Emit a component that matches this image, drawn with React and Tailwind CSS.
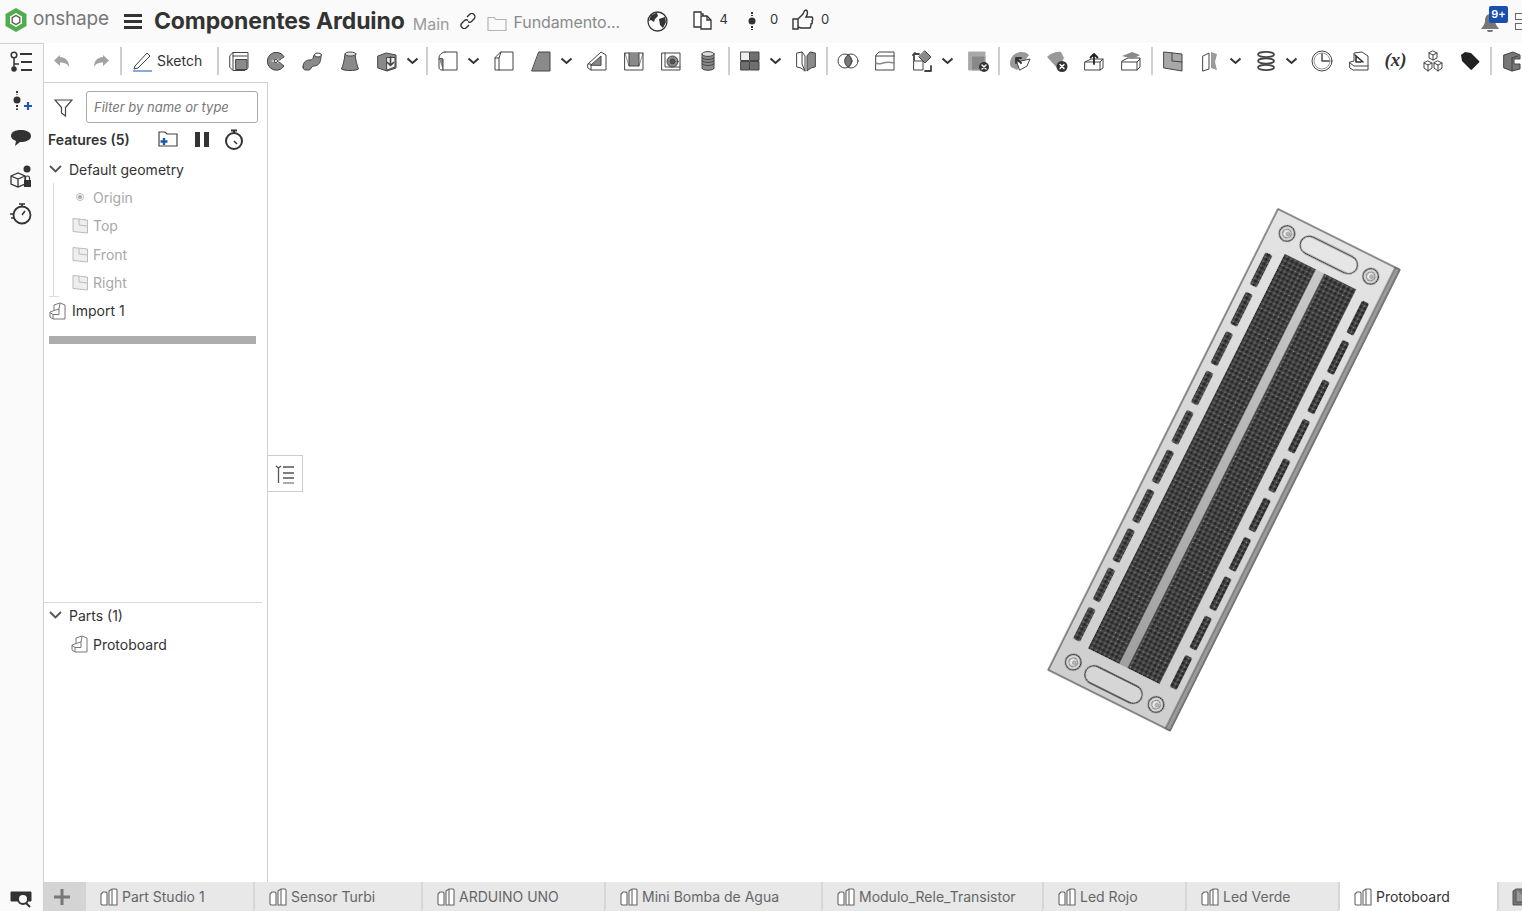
import React from 'react';

const DK = '#444';
const GR = '#8a8a8a';

// 24x24 drawings for the toolbar, keyed by feature name
const glyphs = {
    undo: <path d="M9 6 3 11.5 9 17v-3.5c4 0 7 1 9 4.5 0-6-3-9.5-9-10Z" fill="#a3a3a3" stroke="none" />,
    redo: <path d="M15 6l6 5.5L15 17v-3.5c-4 0-7 1-9 4.5 0-6 3-9.5 9-10Z" fill="#a3a3a3" stroke="none" />,
    extrude: <><path d="M3 6.5 6 3.5h15v15l-3 3H6l-3-3Z" fill="#fff" /><path d="M9 10.5h11v10H9Z" fill={GR} /><path d="M6 7h14M6 3.5V21" /></>,
    revolve: <><path d="M20 7.5A9 9 0 1 0 20 17l-5.5-4.5Z" fill={GR} /><path d="M8 12h13M14 10l-2 2 2 2M18 10l-2 2 2 2" stroke="#fff" /><circle cx="12" cy="12" r="1.6" fill="#fff" /></>,
    sweep: <><path d="M2 18c0-6 4-7 7-7s3-2 4-5l7 1c0 7-3 10-7 10-3 0-3 4-5 4H5c-2 0-3-1-3-3Z" fill={GR} /><ellipse cx="17" cy="6" rx="3.5" ry="2" fill="#fff" /></>,
    loft: <><path d="M7 5c-.5 6-2 11-3.5 15 3 2 14 2 17 0-1.5-4-3-9-3.5-15Z" fill={GR} /><ellipse cx="12.5" cy="5" rx="5.5" ry="2" fill="#ddd" /></>,
    thicken: <><path d="M3 7l8-3 10 2v13l-9 3-9-3Z" fill={GR} /><path d="M12 8.5h8V18l-8 3Z" fill="#eee" /><path d="M15.5 8v8M12.5 13.5l3 3 3-3" strokeWidth="1.6" /></>,
    fillet: <><path d="M9 3h12v18H6c-2 0-3-1-3-3V9c0-3 3-6 6-6Z" fill="#fff" /><path d="M3 10c2-1 3-1 4 0v11" fill={GR} /></>,
    chamfer: <><path d="M9 3h12v18H3V9Z" fill="#fff" /><path d="M3 9h4l2-6M7 9v12" /></>,
    draft: <path d="M10 3h11v19H3Z" fill={GR} />,
    rib: <><path d="M3 15 16 3l5 3v15H6l-3-2Z" fill="#fff" /><path d="M6 16 16 7v9Z" fill={GR} /><path d="M3 15h3v6" /></>,
    shell: <><path d="M3 4h18v17H3Z" fill="#fff" /><path d="M7 4v13h10V4" fill={GR} /><path d="M3 4l4 13M21 4l-4 13" strokeWidth=".6" /></>,
    hole: <><path d="M3 4h18v17H3Z" fill="#fff" /><path d="M6 4v14h15" /><circle cx="13.5" cy="12.5" r="5.5" fill={GR} /><circle cx="13.5" cy="12.5" r="2.4" fill="#555" /></>,
    thread: <><path d="M6 5v14c0 3 12 3 12 0V5" fill={GR} /><ellipse cx="12" cy="5" rx="6" ry="2.4" fill="#ddd" /><path d="M6 9c2 2 10 2 12 0M6 12c2 2 10 2 12 0M6 15c2 2 10 2 12 0" /></>,
    pattern: <><path d="M3 3h8.5v8.5H3Z" fill="#eee" /><path d="M12.5 3H21v8.5h-8.5ZM3 12.5h8.5V21H3ZM12.5 12.5H21V21h-8.5Z" fill="#6f6f6f" /></>,
    mirror: <><path d="M3 4l5-1 3 4v15l-4-3-4-1Z" fill="#fff" /><path d="M21 4l-5-1-3 4v15l4-3 4-1Z" fill={GR} /><path d="M8 3v12l3 7" /></>,
    boolean: <><circle cx="15" cy="12" r="7" fill="#fff" /><circle cx="9" cy="12" r="7" fill="#fff" /><path d="M12 6a7 7 0 0 1 0 12 7 7 0 0 1 0-12Z" fill="#777" /></>,
    split: <><path d="M3 6l3-3h15v18H3Z" fill="#fff" /><path d="M3 14c5 3 7-3 18 0" stroke={GR} strokeWidth="1.6" /><path d="M3 7h18" /></>,
    transform: <><path d="M4 12h9v9H4Z" fill="#fff" /><path d="M15 2l6 6-6 6-6-6Z" fill={GR} /><path d="M4 11V5h5M5 4l-2 2M15 22h6v-5" strokeWidth="1.8" /></>,
    deletePart: <><path d="M3 3h16v18H3Z" fill="#a8a8a8" stroke="#aaa" /><path d="M6 7h13v14H6Z" fill="#888" stroke="#aaa" /><circle cx="18" cy="18" r="5" fill="#333" stroke="none" /><path d="M16 16l4 4M20 16l-4 4" stroke="#fff" strokeWidth="1.4" /></>,
    surface: <><path d="M2 15C2 7 8 3 14 3c3 0 5 1 7 3l-7 10-5 5c-3-2-7-2-7-6Z" fill="#999" stroke="none" /><path d="M9 13 22 10l-3 7-7 4Z" fill="#fff" /><path d="M8 9l5 5M8 9h5M8 9v5" strokeWidth="1.8" stroke="#333" /></>,
    surfaceX: <><path d="M2 8c4-4 10-6 14-5l3 6-6 11Z" fill="#999" stroke="none" /><circle cx="17" cy="17.5" r="5.5" fill="#333" stroke="none" /><path d="M15 15.5l4 4M19 15.5l-4 4" stroke="#fff" strokeWidth="1.4" /></>,
    moveUp: <><path d="M3 13l6-3h12v9l-3 2H3Z" fill="#fff" /><path d="M3 13h15v8M18 13l3-3" /><path d="M12 15V5M8.5 8.5 12 5l3.5 3.5" strokeWidth="1.8" stroke="#222" /></>,
    replace: <><path d="M3 12l6-3h12v9l-3 3H3Z" fill="#fff" /><path d="M3 13h15v8M18 13l3-3" /><path d="M3 7l10-4 8 3-7 4Z" fill={GR} stroke="none" /></>,
    plane: <><path d="M3 3l18 2v17L3 19Z" fill="#a8a8a8" /><path d="M11 4v8l10 1" /></>,
    splitFace: <><path d="M5 7l6-3v16l-6 2Z" fill="#fff" /><path d="M13 3l6 2-2 8 2 8-6-2Z" fill="#9a9a9a" stroke="none" /></>,
    helix: <><ellipse cx="12" cy="5.5" rx="8" ry="2.6" strokeWidth="1.7" /><ellipse cx="12" cy="12" rx="8" ry="2.6" strokeWidth="1.7" /><ellipse cx="12" cy="18.5" rx="8" ry="2.6" strokeWidth="1.7" /></>,
    clock: <><circle cx="12" cy="12" r="10" fill="#fff" /><circle cx="12" cy="12" r="8" fill="#fff" stroke="#999" /><path d="M12 5v7h7" strokeWidth="1.4" /></>,
    imported: <><path d="M3 13l4-1V4l8-1 6 4v14H6l-3-2Z" fill="#fff" /><path d="M9 13V8M9 13h5M8 6l8 7" stroke="#333" strokeWidth="1.6" /><path d="M3 14l4 3h14" /></>,
    cubes: <><path d="M12 2l4 2v5l-4 2-4-2V4ZM8 4l4 2 4-2M12 6v5" fill="#fff" /><path d="M7 12l4 2v5l-4 3-4-3v-5ZM3 14l4 2 4-2M7 16v6M17 12l4 2v5l-4 3-4-3v-5ZM13 14l4 2 4-2M17 16v6" fill="#fff" /></>,
    tag: <path d="M3 6l4-3 6 1 8 8c.5.7.5 1 0 1.5l-7 7c-.5.5-1 .5-1.5 0L4 12Z" fill="#222" stroke="none" />,
    part: <><path d="M4 6l9-3 7 3v4h-6v5h6v5l-8 2-8-3Z" fill="#777" /><path d="M12 9l6-2M12 9v13" /></>,
};

const ToolIcon = ({ name }) => (
    <span className="w-[37px] h-full flex items-center justify-center shrink-0">
        <svg width="24" height="24" viewBox="0 0 24 24" fill="none" stroke={DK} strokeWidth="1" strokeLinejoin="round" strokeLinecap="round">
            {glyphs[name]}
        </svg>
    </span>
);

const Chevron = () => (
    <span className="w-[15px] mr-[4px] h-full flex items-center justify-center shrink-0">
        <svg width="13" height="8" viewBox="0 0 13 8" fill="none" stroke="#333" strokeWidth="2"><path d="M1.5 1.5 6.5 6l5-4.5" /></svg>
    </span>
);

const Sep = () => <span className="w-[2px] mx-[1.5px] h-[28px] bg-[#cfcfcf] shrink-0" />;

const toolbar = [
    'undo', 'redo', '|', 'SKETCH', '|', 'extrude', 'revolve', 'sweep', 'loft', 'thicken', 'v', '|',
    'fillet', 'v', 'chamfer', 'draft', 'v', 'rib', 'shell', 'hole', 'thread', '|',
    'pattern', 'v', 'mirror', '|', 'boolean', 'split', 'transform', 'v', 'deletePart', '|',
    'surface', 'surfaceX', 'moveUp', 'replace', '|', 'plane', 'splitFace', 'v', 'helix', 'v',
    'clock', 'imported', 'X', 'cubes', 'tag', '|', 'part',
];

const Toolbar = () => (
    <div className="h-[39px] pb-[4px] flex items-center overflow-hidden bg-white shrink-0">
        {toolbar.map((item, i) => {
            if (item === '|') return <Sep key={i} />;
            if (item === 'v') return <Chevron key={i} />;
            if (item === 'X') {
                return (
                    <span key={i} className="w-[37px] text-center shrink-0 text-[19px] font-bold italic text-[#333] font-['Liberation_Serif',serif]">(x)</span>
                );
            }
            if (item === 'SKETCH') {
                return (
                    <span key={i} className="w-[92px] flex items-center pl-[8px] gap-[4px] shrink-0 text-[14px] text-[#333]">
                        <svg width="22" height="22" viewBox="0 0 22 22" fill="none" stroke={DK} strokeWidth="1">
                            <path d="M4 16 16 3l3 3L7 18l-4 1Z" fill="#fff" />
                            <path d="M2 21h19" stroke="#3f6fc4" strokeWidth="1.2" />
                        </svg>
                        Sketch
                    </span>
                );
            }
            return <ToolIcon key={i} name={item} />;
        })}
    </div>
);

const Logo = () => (
    <svg width="22" height="24" viewBox="0 0 22 24">
        <path d="M11 0 21.5 6v12L11 24 .5 18V6Z" fill="#4fae4b" />
        <path d="M11 5l6 3.5v7L11 19l-6-3.5v-7Z" fill="#fff" />
        <path d="M11 7.5l3.8 2.2v4.6L11 16.5l-3.8-2.2V9.7Z" fill="none" stroke="#555" strokeWidth="1.3" />
    </svg>
);

const TopBar = () => (
    <div className="h-[43px] bg-[#fafafa] flex items-center shrink-0 overflow-hidden text-[#333]">
        <span className="ml-[5px] mt-[-3px] flex"><Logo /></span>
        <span className="ml-[6px] mt-[-5px] text-[19px] text-[#777] tracking-[-0.2px]">onshape</span>
        <span className="ml-[15px] w-[18px] flex flex-col gap-[3px]">
            <span className="h-[3px] bg-[#333]" /><span className="h-[3px] bg-[#333]" /><span className="h-[3px] bg-[#333]" />
        </span>
        <span className="ml-[12px] text-[23px] font-bold leading-none tracking-[-0.1px]">Componentes Arduino</span>
        <span className="ml-[8px] mt-[5px] text-[16px] text-[#9a9a9a]">Main</span>
        <svg className="ml-[11px] mt-[-1px]" width="16" height="16" viewBox="0 0 16 16" fill="none" stroke="#333" strokeWidth="1.4">
            <path d="M7 4l2.5-2.5a2.5 2.5 0 0 1 4.5 4.5L11.5 8.5a2.5 2.5 0 0 1-3.5 0" />
            <path d="M9 12l-2.5 2.5a2.5 2.5 0 0 1-4.5-4.5L4.5 7.5a2.5 2.5 0 0 1 3.5 0" />
        </svg>
        <svg className="ml-[11px] mt-[3px]" width="20" height="16" viewBox="0 0 20 16" fill="none" stroke="#b5b5b5" strokeWidth="1.2">
            <path d="M1 2.5h6l2 2h10v11H1Z" />
        </svg>
        <span className="ml-[6px] mt-[1px] text-[16px] text-[#8a8a8a] w-[134px] truncate tracking-[-0.1px]">Fundamento...</span>
        <svg width="21" height="21" viewBox="0 0 21 21" className="mt-[-1px]">
            <circle cx="10.5" cy="10.5" r="9.5" fill="#fff" stroke="#333" strokeWidth="1.3" />
            <path d="M4 4c2 0 4-2 6-2l1 3-3 3-1 3-3-2-2 1ZM12 8l6-2 1 5-3 6-3-3Z" fill="#333" />
        </svg>
        <svg className="ml-[24px] mt-[-4px]" width="20" height="20" viewBox="0 0 20 20" fill="none" stroke="#333" strokeWidth="1.3">
            <path d="M2 2h7v2h2v13H2Z" fill="#fff" />
            <path d="M9 6h6l4 4v9H9Z" fill="#fff" /><path d="M15 6v4h4" />
        </svg>
        <span className="ml-[7px] mt-[-4px] text-[13px]">4</span>
        <svg className="ml-[20px] mt-[-2px]" width="8" height="20" viewBox="0 0 8 20">
            <path d="M4 1v4M4 15v4" stroke="#333" strokeWidth="2" strokeDasharray="2 1" />
            <circle cx="4" cy="10" r="3.5" fill="#333" />
        </svg>
        <span className="ml-[14px] mt-[-4px] text-[13px]">0</span>
        <svg className="ml-[14px] mt-[-4px]" width="22" height="21" viewBox="0 0 22 21" fill="none" stroke="#333" strokeWidth="1.4">
            <path d="M1 10h5v10H1ZM6 10l5-5c1-2 1-4 3-4 2 1 2 4 0 7h6c1 1 1 3 0 4 1 1 0 3-1 3 0 2 0 3-1 4H9l-3-1" />
        </svg>
        <span className="ml-[7px] mt-[-4px] text-[13px]">0</span>
        <span className="ml-auto relative w-[32px] h-full shrink-0 flex items-center">
            <svg className="absolute left-[-9px] top-[14px]" width="18" height="18" viewBox="0 0 18 18">
                <path d="M9 0c4 0 5 4 5 7 0 3 2 5 4 8H0c2-3 4-5 4-8 0-3 1-7 5-7ZM6 16h6c0 3-6 3-6 0Z" fill="#777" />
            </svg>
            <span className="absolute left-[-1px] top-[6px] w-[19px] h-[17px] bg-[#1a4fae] rounded-[2px] text-white text-[11px] font-semibold leading-[17px] text-center">9+</span>
            <span className="absolute left-[25px] top-[13px] w-[14px] h-[7px] border border-[#666]" />
            <span className="absolute left-[25px] top-[23px] w-[14px] h-[7px] border border-[#666]" />
        </span>
    </div>
);

const RailIcon = ({ children, className = '' }) => (
    <svg className={className} width="24" height="24" viewBox="0 0 24 24" fill="none" stroke="#333" strokeWidth="1.5">{children}</svg>
);

const Rail = () => (
    <div className="w-[44px] shrink-0 pr-[2px] bg-[#fafafa] border-r border-t border-[#d0d0d0] flex flex-col items-center">
        <RailIcon className="mt-[6px]">
            <circle cx="5" cy="5" r="2.8" /><circle cx="5" cy="19" r="2" fill="#333" /><path d="M5 8v9M5 14h5" />
            <path d="M11 4h12M12 12h11M12 20h11" strokeWidth="2" />
        </RailIcon>
        <RailIcon className="mt-[15px]">
            <path d="M8 2v4M8 16v5" strokeWidth="2" strokeDasharray="2 1.5" />
            <circle cx="8" cy="11" r="3.5" fill="#333" stroke="none" />
            <path d="M15 17h8M19 13v8" stroke="#1f55b5" strokeWidth="2.2" />
        </RailIcon>
        <RailIcon className="mt-[13px]">
            <path d="M12 4c6 0 10 2.5 10 6 0 4-5 6-11 6l-5 4 1-5c-3-1-5-3-5-5 0-4 4-6 10-6Z" fill="#333" stroke="none" />
        </RailIcon>
        <RailIcon className="mt-[14px]">
            <path d="M2 12l7-3 7 3v8l-7 3-7-3ZM2 12l7 3 7-3M9 15v8" strokeWidth="1.3" />
            <circle cx="18" cy="5" r="3.5" fill="#333" stroke="none" />
            <path d="M15 16h7v7h-7Z" fill="#333" stroke="none" />
            <path d="M16.5 16v-2a2 2 0 0 1 4 0v2" strokeWidth="1.2" />
        </RailIcon>
        <RailIcon className="mt-[14px]">
            <circle cx="13" cy="13" r="8.5" strokeWidth="1.8" /><path d="M10 2h6M13 2v3M13 13l3-4" />
            <path d="M1 12h4M2 16h4" strokeWidth="1.3" />
        </RailIcon>
        <svg className="mt-auto mb-[3px]" width="22" height="18" viewBox="0 0 22 18" fill="none" stroke="#333">
            <path d="M1 2h20v9H1Z" fill="#333" />
            <circle cx="13" cy="9" r="5" fill="#fafafa" strokeWidth="2" /><path d="M16 13l4 4" strokeWidth="2" />
        </svg>
    </div>
);

const PlaneIcon = () => (
    <svg width="17" height="17" viewBox="0 0 17 17" fill="#eee" stroke="#bbb"><path d="M1 1.5 15.5 3v13L1 14.5Z" /><path d="M7 2v6l8.5 1" fill="none" /></svg>
);

const PartIcon = ({ stroke = '#555' }) => (
    <svg width="18" height="18" viewBox="0 0 18 18" fill="#fff" stroke={stroke}>
        <path d="M1 10l4-1.5V3l6-2 5 2v14H4l-3-2Z" />
        <path d="M1 10.5 4 12.5h6V7l-5 1.5" fill="none" /><path d="M4 12.5V17M11 1.5 10 7" fill="none" />
    </svg>
);

const Row = ({ children, className = '' }) => (
    <div className={`h-[28.3px] flex items-center text-[14px] ${className}`}>{children}</div>
);

const Caret = () => (
    <svg className="ml-[5px] mr-[7px]" width="13" height="8" viewBox="0 0 13 8" fill="none" stroke="#555" strokeWidth="1.8"><path d="M1 1l5.5 5.5L12 1" /></svg>
);

const PlaneRow = ({ label }) => (
    <Row className="text-[#a8a8a8]">
        <span className="ml-[18px] mr-[4px] flex"><PlaneIcon /></span>{label}
    </Row>
);

const FeaturePanel = () => (
    <div className="w-[224px] shrink-0 border-t border-r border-[#d0d0d0] flex flex-col text-[#333]">
        <div className="flex items-center mt-[8px] h-[32px]">
            <svg className="ml-[10px]" width="19" height="19" viewBox="0 0 19 19" fill="none" stroke="#444" strokeWidth="1.2"><path d="M1 2h17l-6.5 7.5V18L7.5 15V9.5Z" /></svg>
            <input readOnly placeholder="Filter by name or type" className="ml-[13px] w-[172px] h-[32px] border border-[#aaa] rounded-[3px] pl-[7px] text-[13px] italic placeholder:text-[#777] outline-none bg-white" />
        </div>
        <div className="flex items-center h-[28px] mt-[2px] mb-[2px] pl-[4px]">
            <span className="text-[14px] font-semibold w-[110px]">Features (5)</span>
            <svg width="20" height="18" viewBox="0 0 20 18" fill="none" stroke="#444" strokeWidth="1.2"><path d="M1 2h6l2 2h10v12H1Z" fill="#fff" /><path d="M6 8v7M2.5 11.5h7" stroke="#1f55b5" strokeWidth="2.4" /></svg>
            <span className="ml-[17px] flex gap-[4px]"><span className="w-[5px] h-[15px] bg-[#333]" /><span className="w-[5px] h-[15px] bg-[#333]" /></span>
            <svg className="ml-[15px]" width="20" height="21" viewBox="0 0 20 21" fill="none" stroke="#333" strokeWidth="2"><circle cx="10" cy="12" r="8" /><path d="M7 1.5h6M10 2v2" /><path d="M10 12l3 3" strokeWidth="1.5" /></svg>
        </div>
        <Row>
            <Caret />Default geometry
        </Row>
        <div className="relative ml-[9px] border-l border-[#ddd]">
            <Row className="text-[#a8a8a8]">
                <span className="ml-[22px] mr-[9px] w-[8px] h-[8px] rounded-full border border-[#bbb] flex items-center justify-center">
                    <span className="w-[4px] h-[4px] rounded-full bg-[#aaa]" />
                </span>
                Origin
            </Row>
            <PlaneRow label="Top" />
            <PlaneRow label="Front" />
            <PlaneRow label="Right" />
            <span className="absolute left-[-5px] bottom-[-1px] w-[10px] h-px bg-[#ddd]" />
        </div>
        <Row>
            <span className="ml-[5px] mr-[5px] flex"><PartIcon stroke="#777" /></span>Import 1
        </Row>
        <div className="mt-[11px] ml-[5px] w-[207px] h-[8px] bg-[#adadad]" />
        <div className="mt-auto mr-[5px] h-[280px] border-t border-[#d9d9d9]">
            <Row className="mt-[-2px]"><Caret />Parts (1)</Row>
            <Row className="mt-[1px]"><span className="ml-[27px] mr-[4px] flex"><PartIcon stroke="#777" /></span>Protoboard</Row>
        </div>
    </div>
);

const slotVs = [62, 106, 150, 194, 238, 282, 326, 370, 414, 458];

const Screw = ({ x, y }) => (
    <g>
        <circle cx={x} cy={y} r="7.8" fill="#d8d8d8" stroke="#333" strokeWidth="1.3" />
        <circle cx={x} cy={y} r="4.3" fill="#eee" stroke="#555" strokeWidth=".9" />
        <circle cx={x + 1} cy={y} r="1.9" fill="#bbb" stroke="#777" strokeWidth=".6" />
    </g>
);

const Breadboard = () => (
    <svg className="absolute left-[772px] top-[118px]" width="370" height="540" viewBox="0 0 370 540">
        <defs>
            <pattern id="holes" width="4.8" height="4.8" patternUnits="userSpaceOnUse">
                <rect width="4.8" height="4.8" fill="#484848" />
                <circle cx="2.4" cy="2.4" r="1.6" fill="#242424" />
                <circle cx=".3" cy=".3" r=".7" fill="#aaa" />
            </pattern>
            <linearGradient id="face" x1="0" y1="0" x2="0" y2="1">
                <stop offset="0" stopColor="#e4e4e4" />
                <stop offset=".4" stopColor="#d8d8d8" />
                <stop offset="1" stopColor="#cfcfcf" />
            </linearGradient>
            <linearGradient id="strip" x1="0" y1="0" x2="0" y2="1">
                <stop offset="0" stopColor="#c8c8c8" />
                <stop offset="1" stopColor="#a0a0a0" />
            </linearGradient>
            <filter id="soft"><feGaussianBlur stdDeviation=".35" /></filter>
        </defs>
        <g transform="translate(238 9) rotate(26.5)" filter="url(#soft)">
            <rect x="0" y="0" width="136" height="515" fill="url(#face)" stroke="#444" strokeWidth="1.2" />
            <rect x="131" y="0" width="5" height="515" fill="#9a9a9a" stroke="#444" strokeWidth=".8" />
            <rect x="26" y="37" width="34" height="441" fill="url(#holes)" />
            <rect x="71" y="37" width="35" height="441" fill="url(#holes)" />
            <rect x="60" y="37" width="11" height="441" fill="url(#strip)" />
            <path d="M60.5 37v441M70.5 37v441" stroke="#333" strokeWidth=".8" />
            {slotVs.map((v) => (
                <g key={v}>
                    <rect x="8" y={v - 18} width="8" height="36" rx="2.5" fill="url(#holes)" />
                    <rect x="116" y={v - 18} width="8" height="36" rx="2.5" fill="url(#holes)" />
                </g>
            ))}
            <rect x="35" y="9.5" width="62" height="18" rx="9" fill="#e6e6e6" stroke="#333" strokeWidth="1.3" />
            <rect x="34" y="490" width="62" height="18" rx="9" fill="#d6d6d6" stroke="#333" strokeWidth="1.3" />
            <Screw x={19} y={18} />
            <Screw x={113} y={19} />
            <Screw x={19} y={497} />
            <Screw x={112} y={498} />
        </g>
    </svg>
);

const tabs = [
    { name: 'Part Studio 1', w: 169 },
    { name: 'Sensor Turbi', w: 168 },
    { name: 'ARDUINO UNO', w: 183 },
    { name: 'Mini Bomba de Agua', w: 217 },
    { name: 'Modulo_Rele_Transistor', w: 221 },
    { name: 'Led Rojo', w: 143 },
    { name: 'Led Verde', w: 153 },
    { name: 'Protoboard', w: 159, active: true },
];

const StudioIcon = () => (
    <svg width="20" height="18" viewBox="0 0 20 18" fill="#fff" stroke="#666" strokeWidth="1.1" className="shrink-0">
        <path d="M2 6l2-2h3l1 1v12H3l-1-1Z" /><path d="M10 3l3-2h4l1 1v15h-8Z" /><path d="M13 1v16" fill="none" />
    </svg>
);

const TabBar = () => (
    <div className="h-[29px] flex shrink-0 bg-[#e8e8e8] overflow-hidden">
        <div className="w-[42px] pr-[6px] bg-[#d4d4d4] flex items-center justify-center shrink-0">
            <svg width="16" height="16" viewBox="0 0 16 16" stroke="#777" strokeWidth="3"><path d="M0 8h16M8 0v16" /></svg>
        </div>
        {tabs.map((t) => (
            <div
                key={t.name}
                style={{ width: t.w }}
                className={`shrink-0 flex items-center pl-[13px] gap-[3px] text-[14px] border-r-2 border-[#d6d6d6] rounded-br-[3px] ${t.active ? 'bg-white text-[#333]' : 'text-[#666]'}`}
            >
                <StudioIcon />{t.name}
            </div>
        ))}
        <div className="shrink-0 pl-[13px] flex items-center">
            <svg width="18" height="18" viewBox="0 0 18 18" fill="#777" stroke="#555"><path d="M1 3l3-2h13v14l-3 2H1Z" /><path d="M4 1v13h13" fill="#999" /></svg>
        </div>
    </div>
);

const App = () => (
    <div className="h-[911px] w-full overflow-hidden flex flex-col bg-white font-['Inter','Noto_Sans',sans-serif]">
        <TopBar />
        <div className="flex-1 flex min-h-0">
            <Rail />
            <div className="flex-1 flex flex-col min-w-0">
                <Toolbar />
                <div className="flex-1 flex min-h-0">
                    <FeaturePanel />
                    <div className="relative flex-1">
                        <Breadboard />
                        <div className="absolute left-0 top-[373px] w-[35px] h-[37px] bg-white border border-l-0 border-[#ccc] flex items-center justify-center">
                            <svg width="22" height="22" viewBox="0 0 22 22" fill="none" stroke="#555" strokeWidth="1.3">
                                <path d="M2 3l2.5 2L7 3M4.5 5v15" /><path d="M9 4h11M9 10h11M9 15h11" /><path d="M9 20h11" stroke="#aaa" strokeWidth="2" />
                            </svg>
                        </div>
                    </div>
                </div>
                <TabBar />
            </div>
        </div>
    </div>
);

export default App;
